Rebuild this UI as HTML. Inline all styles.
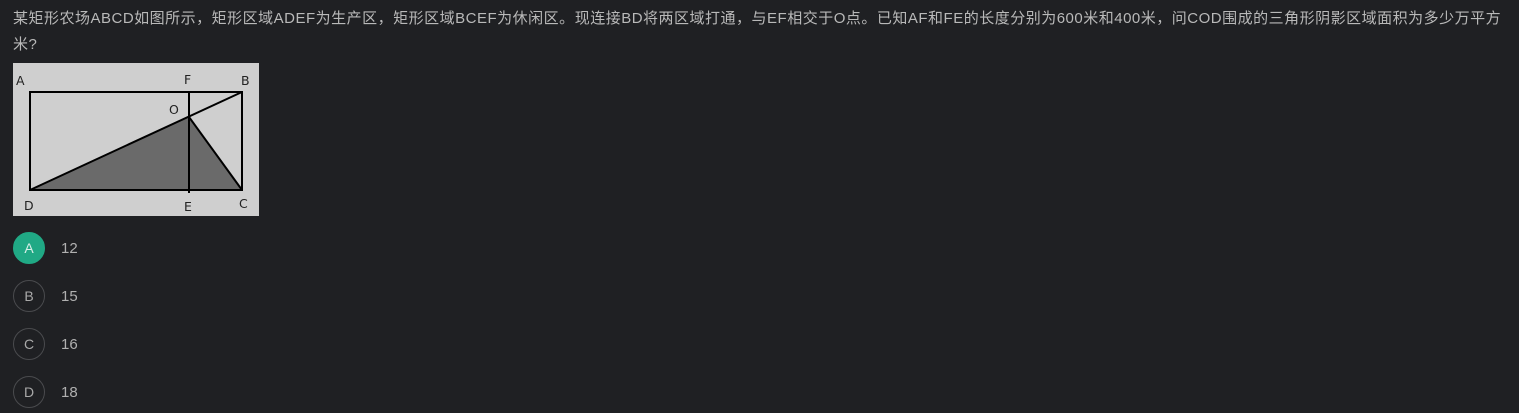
<!DOCTYPE html>
<html><head><meta charset="utf-8"><style>
body{margin:0;background:#1f2023;width:1519px;height:413px;overflow:hidden;font-family:"Liberation Sans","Noto Sans CJK SC",sans-serif;color:#b9b9b9}
.q{position:absolute;left:13px;top:6px;width:1506px;font-size:15px;line-height:26px;letter-spacing:0.5px;white-space:nowrap}
.fig{position:absolute;left:13px;top:63px}
.opt{position:absolute;left:13px;width:300px;height:32px}
.c{position:absolute;left:0;top:0;width:30px;height:30px;border:1px solid #4a4b4e;border-radius:50%;text-align:center;line-height:30px;font-size:14px;color:#a9a9a9}
.c.s{background:#20a985;border-color:#20a985;color:#d7efe8}
.t{position:absolute;left:48px;top:1px;line-height:32px;font-size:15px;color:#b0b0b0}
</style></head><body>
<div class="q">某矩形农场ABCD如图所示，矩形区域ADEF为生产区，矩形区域BCEF为休闲区。现连接BD将两区域打通，与EF相交于O点。已知AF和FE的长度分别为600米和400米，问COD围成的三角形阴影区域面积为多少万平方<br>米?</div>
<svg class="fig" width="246" height="153" viewBox="0 0 246 153">
<rect width="246" height="153" fill="#cfcfcf"/>
<polygon points="17,127 176,54 229,127" fill="#6a6a6a"/>
<g stroke="#000" stroke-width="2" fill="none">
<rect x="17" y="29" width="212" height="98"/>
<line x1="176" y1="29" x2="176" y2="130"/>
<line x1="17" y1="127" x2="229" y2="29"/>
<line x1="176" y1="54" x2="229" y2="127"/>
</g>
<g font-family="DejaVu Sans,sans-serif" font-size="12.5" fill="#222">
<text x="3" y="22">A</text><text x="171" y="21">F</text><text x="228" y="22">B</text>
<text x="156" y="51">O</text><text x="11" y="147">D</text><text x="171" y="148">E</text><text x="226" y="145">C</text>
</g></svg>
<div class="opt" style="top:232px"><div class="c s">A</div><div class="t">12</div></div>
<div class="opt" style="top:280px"><div class="c">B</div><div class="t">15</div></div>
<div class="opt" style="top:328px"><div class="c">C</div><div class="t">16</div></div>
<div class="opt" style="top:376px"><div class="c">D</div><div class="t">18</div></div>
</body></html>
